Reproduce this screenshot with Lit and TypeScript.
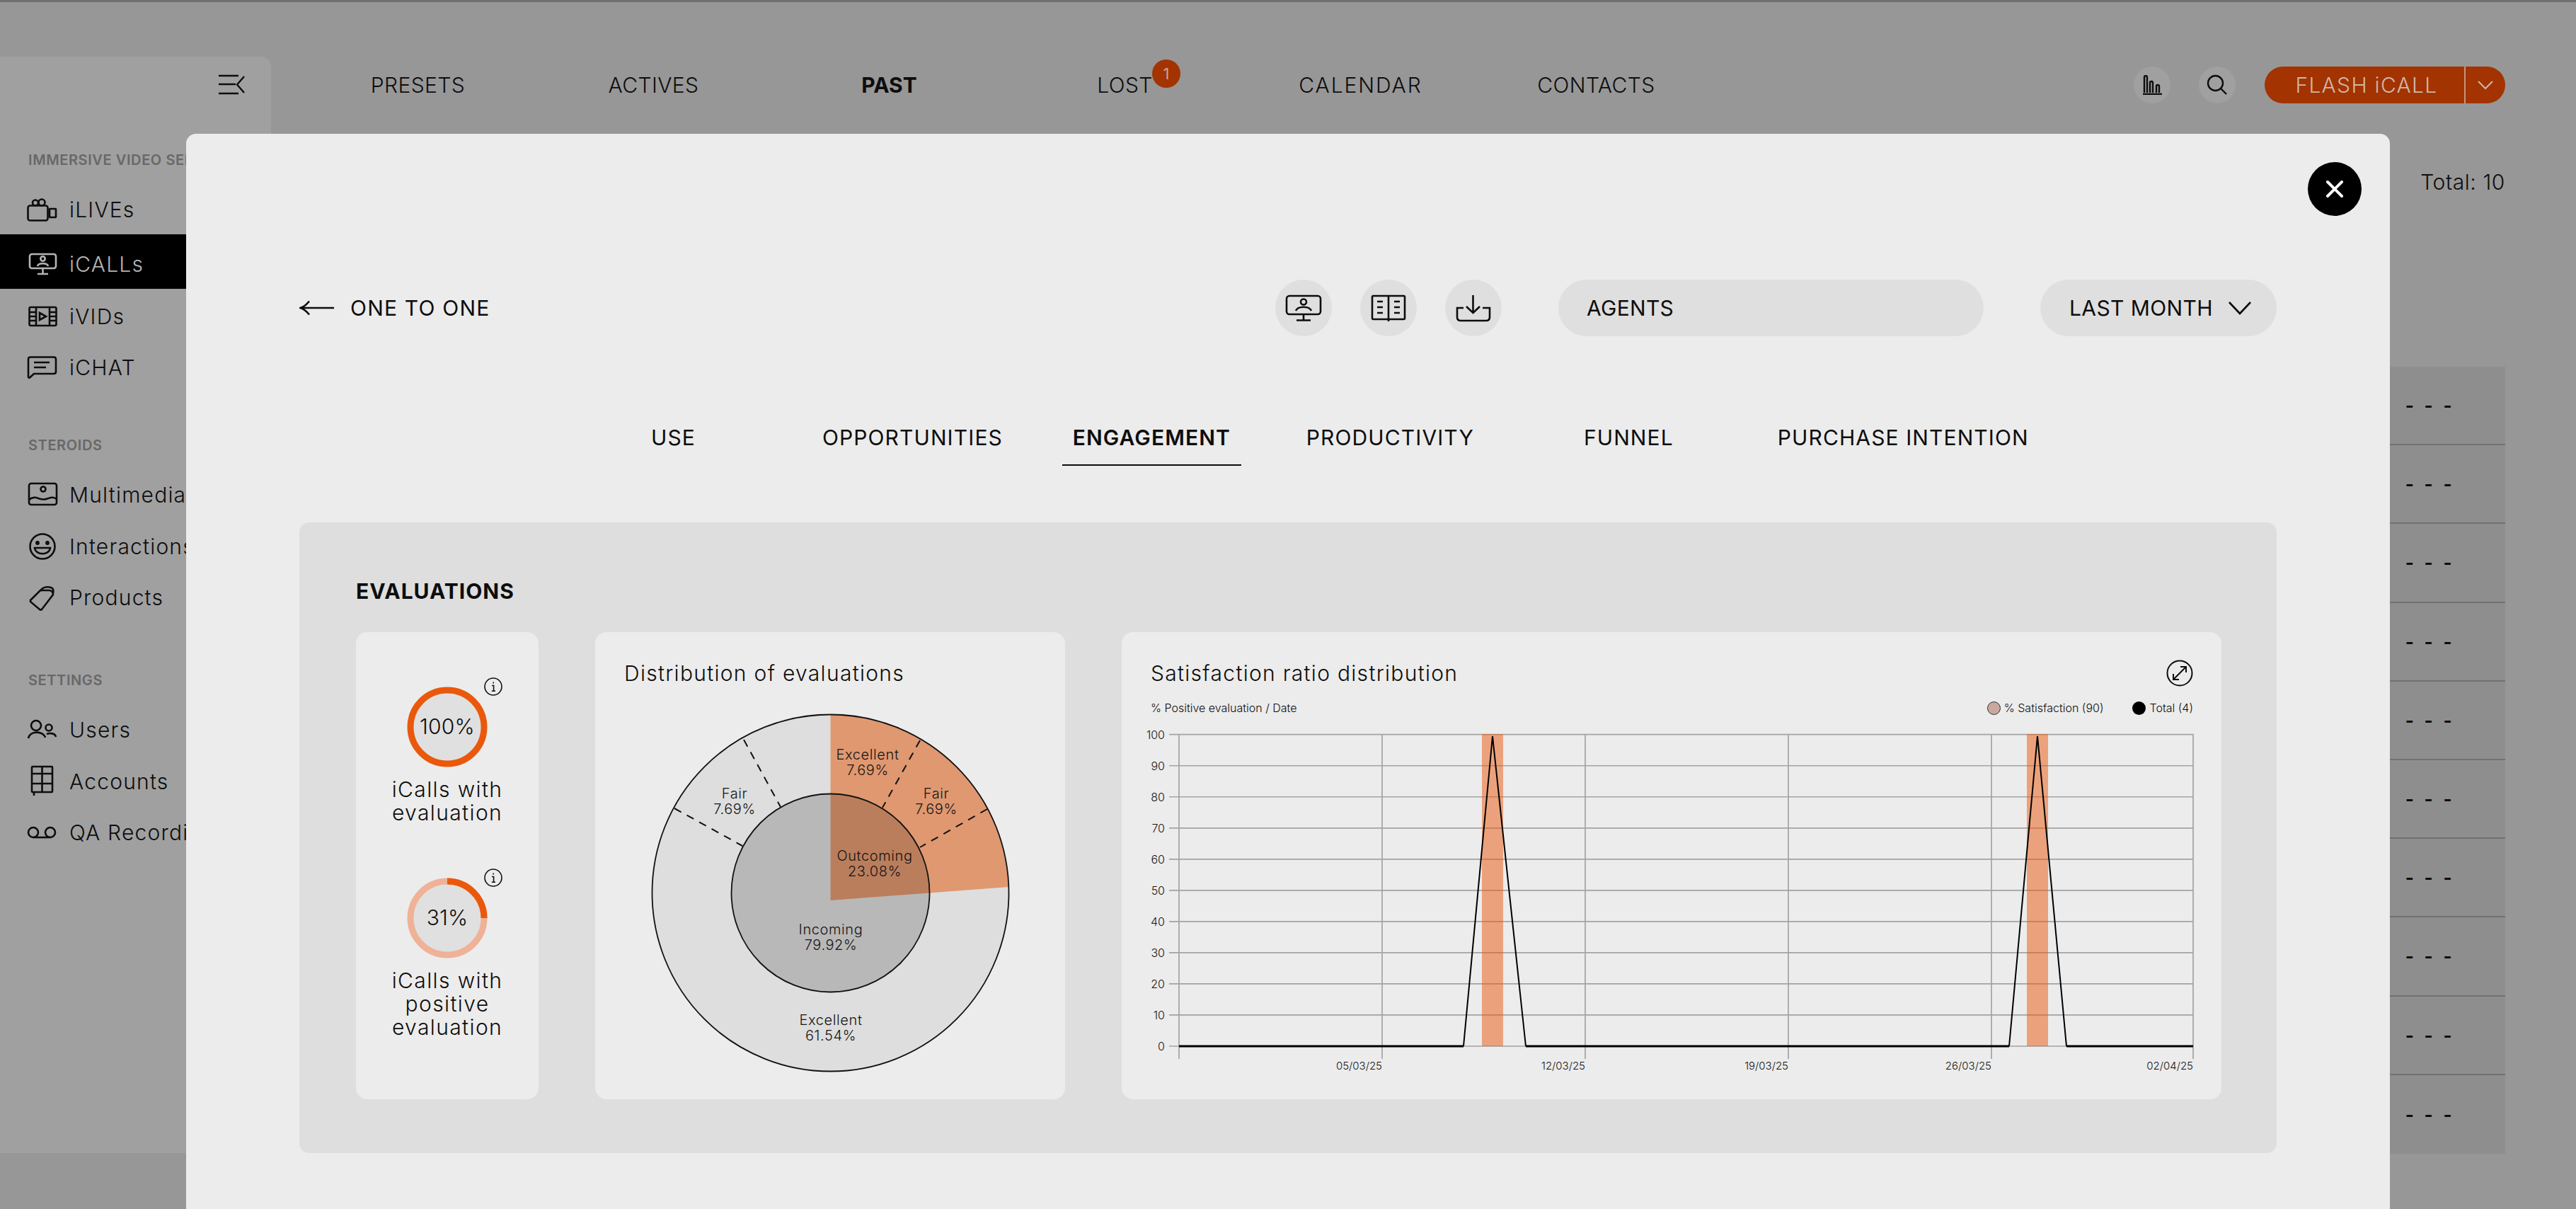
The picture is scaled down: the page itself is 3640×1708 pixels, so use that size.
import { LitElement, html, css, svg } from "lit";
import { customElement } from "lit/decorators.js";

const navItems = [
  { t: "PRESETS", c: "" },
  { t: "ACTIVES", c: "" },
  { t: "PAST", c: "current" },
  { t: "LOST", c: "" },
  { t: "CALENDAR", c: "wide" },
  { t: "CONTACTS", c: "" },
];
const tabs = ["USE", "OPPORTUNITIES", "ENGAGEMENT", "PRODUCTIVITY", "FUNNEL", "PURCHASE INTENTION"];
const yTicks = [0, 10, 20, 30, 40, 50, 60, 70, 80, 90, 100];
const xTicks = [
  { x: 1953, l: "05/03/25" },
  { x: 2240, l: "12/03/25" },
  { x: 2527, l: "19/03/25" },
  { x: 2814, l: "26/03/25" },
  { x: 3099, l: "02/04/25" },
];
const y0 = 1478;
const yStep = 44.03;

const icons: Record<string, unknown> = {
  camera: svg`<rect x="1.5" y="12.5" width="28" height="21" rx="3"/><circle cx="12" cy="8.5" r="4"/><circle cx="21" cy="8" r="4.5"/><rect x="32" y="17" width="9" height="12" rx="0.5"/>`,
  monitor: svg`<rect x="4" y="4" width="37" height="20" rx="3"/><circle cx="22.5" cy="10.5" r="3.2"/><path d="M15 21 C16 16 29 16 30 21"/><path d="M22.5 24 V31 M15 32 H30"/>`,
  film: svg`<rect x="3.5" y="5" width="38" height="26" rx="2"/><path d="M13 5 V31 M32 5 V31 M3.5 12 H13 M3.5 18 H13 M3.5 24 H13 M32 12 H41.5 M32 18 H41.5 M32 24 H41.5"/><path d="M18 13 L27 18 L18 23 Z"/>`,
  chat: svg`<path d="M5 3.5 H38 Q41 3.5 41 6.5 V24 Q41 27 38 27 H10 L4 32.5 Q2 33 2 31 V6.5 Q2 3.5 5 3.5 Z"/><path d="M10 11 H32 M10 18 H27"/>`,
  image: svg`<rect x="3" y="2" width="39" height="30" rx="3"/><circle cx="23" cy="10" r="3.5"/><path d="M3 25 C12 17 18 27 27 24 C33 22 37 20 42 24"/>`,
  smile: svg`<circle cx="22" cy="18" r="17.5"/><circle cx="15" cy="13" r="1.6"/><circle cx="29" cy="13" r="1.6"/><path d="M11 20 H33 C32 31 12 31 11 20 Z"/>`,
  tag: svg`<path d="M5 22 L19 8 H32 Q37 9 37 14 L21 35 Q20 36 18 35 L5 24 Z"/><path d="M19 9 C21 4 28 2 34 4 C37 5 38 8 37 12"/>`,
  users: svg`<circle cx="13" cy="12" r="7"/><path d="M2 30 C4 19 23 19 26 29"/><circle cx="31" cy="15" r="4.5"/><path d="M28 24 C33 22 40 23 41 28"/>`,
  accounts: svg`<rect x="7" y="-3" width="29" height="36" rx="1"/><path d="M21.5 -3 V33 M7 7 H36 M7 21 H36 M10 33 V38"/>`,
  voicemail: svg`<circle cx="9" cy="18" r="7"/><circle cx="33" cy="18" r="7"/><path d="M9 25 H33"/>`,
};

const sidebarGroups = [
  {
    cls: "g1",
    label: "IMMERSIVE VIDEO SERVICES",
    items: [
      { icon: "camera", text: "iLIVEs" },
      { icon: "monitor", text: "iCALLs", active: true },
      { icon: "film", text: "iVIDs" },
      { icon: "chat", text: "iCHAT" },
    ],
  },
  {
    cls: "g2",
    label: "STEROIDS",
    items: [
      { icon: "image", text: "Multimedia" },
      { icon: "smile", text: "Interactions" },
      { icon: "tag", text: "Products" },
    ],
  },
  {
    cls: "g3",
    label: "SETTINGS",
    items: [
      { icon: "users", text: "Users" },
      { icon: "accounts", text: "Accounts" },
      { icon: "voicemail", text: "QA Recordings" },
    ],
  },
];

const ring = (label: string, arc: boolean) => html`
  <div class="ring">
    <svg class="ring-svg" viewBox="0 0 114 114" width="114" height="114">
      <circle cx="57" cy="57" r="52" fill="#e0e0e0" stroke=${arc ? "#efb296" : "#ea580c"} stroke-width="9"></circle>
      ${arc ? svg`<path d="M57 5 A52 52 0 0 1 109 57" fill="none" stroke="#ea580c" stroke-width="9"></path>` : ""}
      <text x="57" y="67" text-anchor="middle" class="ring-text">${label}</text>
    </svg>
    <svg class="info" viewBox="0 0 26 26" width="26" height="26">
      <circle cx="13" cy="13" r="12" fill="none" stroke="#111" stroke-width="1.6"></circle>
      <path d="M11 11.5 H13.6 V19 M10.8 19.2 H16 M13.2 6.5 V8.6" fill="none" stroke="#111" stroke-width="1.6"></path>
    </svg>
  </div>
`;

@customElement("app-root")
export class AppRoot extends LitElement {
  static styles = css`
    :host {
      display: block;
      position: relative;
      width: 3640px;
      height: 1708px;
      overflow: hidden;
      background: #979797;
      font-family: Inter, "Liberation Sans", sans-serif;
      color: #0d0d0d;
    }
    svg { display: block; }
    .topline { height: 3px; background: #6f6f6f; }
    .page { display: flex; padding-top: 77px; align-items: flex-start; }

    .sidebar {
      flex: none;
      width: 383px;
      height: 1549px;
      background: #a0a0a0;
      border-top-right-radius: 14px;
      white-space: nowrap;
      overflow: hidden;
    }
    .side-head {
      height: 125px;
      display: flex;
      justify-content: flex-end;
      padding: 24px 36px 0 0;
      box-sizing: border-box;
    }
    .side-label {
      height: 42px;
      line-height: 42px;
      margin-bottom: 13px;
      padding-left: 40px;
      font-size: 20px;
      font-weight: 600;
      color: #686868;
      letter-spacing: 0.6px;
    }
    .g2 { margin-top: 53.5px; }
    .g3 { margin-top: 59px; }
    .item {
      height: 72px;
      display: flex;
      align-items: center;
      gap: 16px;
      padding-left: 38px;
      font-size: 30px;
      font-weight: 300;
      letter-spacing: 1.2px;
      box-sizing: border-box;
    }
    .g2 .item { height: 72.6px; }
    .g3 .item { height: 72.6px; }
    .item svg {
      flex: none;
      width: 44px;
      height: 36px;
      fill: none;
      stroke: currentColor;
      stroke-width: 2.6;
      overflow: visible;
    }
    .item.active {
      height: 77px;
      margin-top: -1px;
      margin-bottom: 2.5px;
      padding-top: 6px;
      background: #000;
      color: #b4b4b4;
    }

    .main { flex: 1; min-width: 0; }
    .topbar {
      height: 80px;
      display: flex;
      align-items: center;
      padding: 0 100px 0 41px;
    }
    .nav { display: grid; grid-template-columns: repeat(6, 333px); flex: none; }
    .nav-item {
      text-align: center;
      font-size: 30px;
      font-weight: 300;
      letter-spacing: 0.4px;
    }
    .nav-item.wide { letter-spacing: 1.9px; }
    .nav-item.current { font-weight: 700; letter-spacing: 0; }
    .lost { position: relative; display: inline-block; }
    .badge {
      position: absolute;
      left: 78px;
      top: -18px;
      width: 40px;
      height: 40px;
      border-radius: 50%;
      background: #a33300;
      color: #c9a594;
      font-size: 22px;
      font-weight: 400;
      line-height: 40px;
      text-align: center;
    }
    .actions { margin-left: auto; display: flex; align-items: center; }
    .round {
      width: 52px;
      height: 52px;
      border-radius: 50%;
      background: #a0a0a0;
      display: flex;
      align-items: center;
      justify-content: center;
    }
    .round + .round { margin-left: 40px; }
    .round svg { fill: none; stroke: #0d0d0d; stroke-width: 2.4; }
    .flash {
      margin-left: 41px;
      width: 340px;
      height: 52px;
      border-radius: 26px;
      background: #a33300;
      color: #cdb8aa;
      display: flex;
      font-size: 30px;
      font-weight: 300;
    }
    .flash-main {
      width: 284px;
      border-right: 2px solid #c5957c;
      box-sizing: border-box;
      display: flex;
      align-items: center;
      justify-content: center;
      padding-left: 6px;
      letter-spacing: 1.3px;
    }
    .flash-more { flex: 1; display: flex; align-items: center; justify-content: center; }
    .flash-more svg { fill: none; stroke: #cdb8aa; stroke-width: 2; }
    .total-row {
      height: 358px;
      padding-right: 100px;
      text-align: right;
      font-size: 30px;
      font-weight: 300;
      line-height: 34px;
      letter-spacing: 0.6px;
      box-sizing: border-box;
    }
    .total-spacer { height: 80px; }
    .table { margin: 0 100px 0 40px; }
    .row {
      height: 111.2px;
      box-sizing: border-box;
      background: #8e8e8e;
      border-bottom: 2px solid #717171;
      display: flex;
      align-items: center;
      justify-content: flex-end;
      padding-right: 71px;
      font-size: 26px;
      font-weight: 700;
      letter-spacing: 4.3px;
    }
    .row:last-child { border-bottom: none; }

    .modal {
      position: absolute;
      left: 263px;
      top: 189px;
      width: 3114px;
      height: 1519px;
      box-sizing: border-box;
      padding: 206px 160px 0 160px;
      background: #ececec;
      border-radius: 14px 14px 0 0;
    }
    .close {
      position: absolute;
      left: 2998px;
      top: 40px;
      width: 76px;
      height: 76px;
      border-radius: 50%;
      background: #000;
      display: flex;
      align-items: center;
      justify-content: center;
    }
    .close svg { stroke: #fff; stroke-width: 4; fill: none; stroke-linecap: round; }
    .head { display: flex; align-items: center; height: 80px; }
    .back { display: flex; align-items: center; gap: 23px; font-size: 30px; font-weight: 400; letter-spacing: 1.2px; }
    .back svg { fill: none; stroke: #0d0d0d; stroke-width: 2.6; }
    .head-right { margin-left: auto; display: flex; align-items: center; }
    .pill-icon {
      width: 80px;
      height: 80px;
      border-radius: 50%;
      background: #dfdfdf;
      display: flex;
      align-items: center;
      justify-content: center;
      margin-right: 40px;
    }
    .pill-icon svg { fill: none; stroke: #0d0d0d; stroke-width: 2.6; overflow: visible; }
    .agents {
      margin-left: 40px;
      width: 601px;
      height: 80px;
      border-radius: 40px;
      background: #dfdfdf;
      display: flex;
      align-items: center;
      padding-left: 40px;
      box-sizing: border-box;
      font-size: 30px;
      font-weight: 400;
      letter-spacing: 0.3px;
    }
    .period {
      margin-left: 80px;
      width: 334px;
      height: 80px;
      border-radius: 40px;
      background: #dfdfdf;
      display: flex;
      align-items: center;
      padding-left: 41px;
      gap: 21px;
      box-sizing: border-box;
      font-size: 30px;
      font-weight: 400;
      letter-spacing: 0.4px;
      white-space: nowrap;
    }
    .period svg { fill: none; stroke: #0d0d0d; stroke-width: 2.6; }

    .tabs { display: flex; gap: 84px; margin: 103px 0 80px 402px; height: 80px; }
    .tab {
      flex: none;
      min-width: 253px;
      box-sizing: border-box;
      text-align: center;
      line-height: 80px;
      font-size: 30px;
      font-weight: 400;
      letter-spacing: 1.1px;
      white-space: nowrap;
    }
    .tab.on { font-weight: 600; border-bottom: 2.5px solid #0d0d0d; }

    .panel {
      height: 891px;
      box-sizing: border-box;
      padding: 72px 78px 0 80px;
      background: #dedede;
      border-radius: 14px;
    }
    .panel-title { height: 50px; line-height: 50px; margin-bottom: 33px; font-size: 30px; font-weight: 700; letter-spacing: 1px; }
    .cards { display: flex; gap: 80px; height: 660px; }
    .card { background: #ececec; border-radius: 16px; box-sizing: border-box; flex: none; }
    .card-stats {
      width: 258px;
      padding-top: 77px;
      display: flex;
      flex-direction: column;
      align-items: center;
    }
    .stat { display: flex; flex-direction: column; align-items: center; }
    .stat + .stat { margin-top: 75px; }
    .ring { position: relative; width: 114px; height: 114px; }
    .ring-text { font-size: 30px; font-weight: 300; fill: #0d0d0d; font-family: Inter, sans-serif; letter-spacing: 0.2px; }
    .info { position: absolute; left: 109px; top: -13px; }
    .stat-label {
      margin-top: 15px;
      text-align: center;
      font-size: 30px;
      font-weight: 300;
      line-height: 33px;
      letter-spacing: 1.4px;
    }
    .card-pie { width: 664px; padding-top: 38px; }
    .card-title { height: 40px; line-height: 40px; font-size: 30px; font-weight: 300; letter-spacing: 1.3px; }
    .card-pie .card-title { padding-left: 41px; }
    .pie-svg { margin-top: 19px; }
    .pie-label { font-size: 20px; font-weight: 300; fill: #151515; text-anchor: middle; font-family: Inter, sans-serif; letter-spacing: 0.6px; }
    .card-chart { width: 1554px; padding-top: 38px; }
    .chart-head { display: flex; justify-content: space-between; align-items: center; padding: 0 40px 0 41px; }
    .chart-head svg { fill: none; stroke: #0d0d0d; stroke-width: 2; }
    .legend-row {
      margin-top: 12px;
      height: 34px;
      padding: 0 40px 0 41px;
      display: flex;
      align-items: center;
      font-size: 16px;
      font-weight: 300;
    }
    .legend-row .grow { flex: 1; }
    .legend { display: flex; align-items: center; gap: 5px; }
    .legend + .legend { margin-left: 41px; }
    .swatch { width: 19px; height: 19px; border-radius: 50%; box-sizing: border-box; }
    .swatch.a { background: #c9a89d; border: 1.5px solid #333; }
    .swatch.b { background: #000; }
    .axis { font-size: 16px; font-weight: 300; fill: #151515; font-family: Inter, sans-serif; }
    .axis.x { font-size: 15px; }
  `;

  render() {
    return html`
      <div class="topline"></div>
      <div class="page">
        <aside class="sidebar">
          <div class="side-head">
            <svg width="40" height="30" viewBox="0 0 40 30" fill="none" stroke="#0d0d0d" stroke-width="2.4">
              <path d="M2 3 H30 M2 15 H26 M2 28 H30 M38 4 L28 15.5 L38 27"></path>
            </svg>
          </div>
          ${sidebarGroups.map(
            (g) => html`
              <div class=${g.cls}>
                <div class="side-label">${g.label}</div>
                ${g.items.map(
                  (it: any) => html`
                    <div class="item ${it.active ? "active" : ""}">
                      <svg viewBox="0 0 44 36">${icons[it.icon]}</svg>
                      <span>${it.text}</span>
                    </div>
                  `
                )}
              </div>
            `
          )}
        </aside>
        <div class="main">
          <header class="topbar">
            <nav class="nav">
              ${navItems.map((n) =>
                n.t === "LOST"
                  ? html`<div class="nav-item"><span class="lost">LOST<span class="badge">1</span></span></div>`
                  : html`<div class="nav-item ${n.c}">${n.t}</div>`
              )}
            </nav>
            <div class="actions">
              <div class="round">
                <svg width="28" height="28" viewBox="0 0 28 28">
                  <path d="M1 27 H28 M3 25 V3 Q3 1 5 1 Q7 1 7 3 V25 M11 25 V11 Q11 9 13 9 Q15 9 15 11 V25 M20 25 V16 Q20 14 22 14 Q24 14 24 16 V25"></path>
                </svg>
              </div>
              <div class="round">
                <svg width="30" height="30" viewBox="0 0 30 30">
                  <circle cx="12.5" cy="12.5" r="10.5"></circle>
                  <path d="M20 20 L28 28"></path>
                </svg>
              </div>
              <div class="flash">
                <div class="flash-main">FLASH iCALL</div>
                <div class="flash-more">
                  <svg width="24" height="14" viewBox="0 0 24 14"><path d="M2 2 L12 12 L22 2"></path></svg>
                </div>
              </div>
            </div>
          </header>
          <div class="total-row"><div class="total-spacer"></div>Total: 10</div>
          <div class="table">
            ${Array.from({ length: 10 }).map(() => html`<div class="row">- - -</div>`)}
          </div>
        </div>
      </div>

      <section class="modal">
        <div class="close">
          <svg width="26" height="26" viewBox="0 0 26 26"><path d="M3 3 L23 23 M23 3 L3 23"></path></svg>
        </div>
        <div class="head">
          <div class="back">
            <svg width="49" height="22" viewBox="0 0 49 22"><path d="M49 11 H2 M14 1.5 Q8 9 1.5 11 Q8 13 14 20.5"></path></svg>
            <span>ONE TO ONE</span>
          </div>
          <div class="head-right">
            <div class="pill-icon">
              <svg width="50" height="36" viewBox="0 0 50 36">
                <rect x="1" y="1" width="48" height="26" rx="4"></rect>
                <circle cx="25" cy="9.5" r="4"></circle>
                <path d="M14 22 C17 15 33 15 36 22 M25 27 V35 M15 35.5 H35"></path>
              </svg>
            </div>
            <div class="pill-icon">
              <svg width="48" height="36" viewBox="0 0 48 36">
                <rect x="1" y="1" width="46" height="33" rx="1.5"></rect>
                <path d="M24 1 V37 M8 9 H16 M8 17 H16 M8 25 H16 M32 9 H40 M32 17 H40 M32 25 H40"></path>
              </svg>
            </div>
            <div class="pill-icon">
              <svg width="50" height="37" viewBox="0 0 50 37">
                <path d="M24.5 0 V24 M15 16 L24.5 25 L34 16"></path>
                <path d="M11 18 H2 V31 Q2 36 7 36 H43 Q48 36 48 31 V18 H38"></path>
              </svg>
            </div>
            <div class="agents">AGENTS</div>
            <div class="period">
              <span>LAST MONTH</span>
              <svg width="34" height="20" viewBox="0 0 34 20"><path d="M2 2 L17 18 L32 2"></path></svg>
            </div>
          </div>
        </div>
        <div class="tabs">
          ${tabs.map((t) => html`<div class="tab ${t === "ENGAGEMENT" ? "on" : ""}">${t}</div>`)}
        </div>
        <div class="panel">
          <div class="panel-title">EVALUATIONS</div>
          <div class="cards">
            <div class="card card-stats">
              <div class="stat">${ring("100%", false)}<div class="stat-label">iCalls with<br />evaluation</div></div>
              <div class="stat">${ring("31%", true)}<div class="stat-label">iCalls with<br />positive<br />evaluation</div></div>
            </div>
            <div class="card card-pie">
              <div class="card-title">Distribution of evaluations</div>
              <svg class="pie-svg" width="664" height="563" viewBox="841 990 664 563">
                <defs>
                  <clipPath id="inner"><circle cx="1173.5" cy="1261.5" r="140"></circle></clipPath>
                </defs>
                <circle cx="1173.5" cy="1261.5" r="252" fill="#dedede"></circle>
                <path d="M1173.5 1009.5 A252 252 0 0 1 1425 1253 L1173.5 1272 Z" fill="#e09870"></path>
                <circle cx="1173.5" cy="1261.5" r="140" fill="#b9b8b8"></circle>
                <path d="M1173.5 1009.5 A252 252 0 0 1 1425 1253 L1173.5 1272 Z" fill="#bb7e5c" clip-path="url(#inner)"></path>
                <g fill="none" stroke="#111" stroke-width="1.8">
                  <circle cx="1173.5" cy="1261.5" r="252"></circle>
                  <circle cx="1173.5" cy="1261.5" r="140"></circle>
                </g>
                <g fill="none" stroke="#111" stroke-width="2" stroke-dasharray="11 9">
                  <path d="M1300 1046 L1247 1141"></path>
                  <path d="M1395 1143 L1300 1197"></path>
                  <path d="M1051 1045 L1103 1140"></path>
                  <path d="M953 1142 L1049 1195"></path>
                </g>
                <text class="pie-label" x="1226" y="1073">Excellent</text>
                <text class="pie-label" x="1226" y="1095">7.69%</text>
                <text class="pie-label" x="1323" y="1128">Fair</text>
                <text class="pie-label" x="1323" y="1150">7.69%</text>
                <text class="pie-label" x="1038" y="1128">Fair</text>
                <text class="pie-label" x="1038" y="1150">7.69%</text>
                <text class="pie-label" x="1236" y="1216">Outcoming</text>
                <text class="pie-label" x="1236" y="1238">23.08%</text>
                <text class="pie-label" x="1174" y="1320">Incoming</text>
                <text class="pie-label" x="1174" y="1342">79.92%</text>
                <text class="pie-label" x="1174" y="1448">Excellent</text>
                <text class="pie-label" x="1174" y="1470">61.54%</text>
              </svg>
            </div>
            <div class="card card-chart">
              <div class="chart-head">
                <div class="card-title">Satisfaction ratio distribution</div>
                <svg width="38" height="38" viewBox="0 0 38 38">
                  <circle cx="19" cy="19" r="17.5"></circle>
                  <path d="M11 27 L27 11 M20 10 H28 V18 M10 20 V28 H18"></path>
                </svg>
              </div>
              <div class="legend-row">
                <span>% Positive evaluation / Date</span>
                <span class="grow"></span>
                <span class="legend"><span class="swatch a"></span>% Satisfaction (90)</span>
                <span class="legend"><span class="swatch b"></span>Total (4)</span>
              </div>
              <svg width="1554" height="536" viewBox="1585 1017 1554 536">
                <g stroke="#a3a3a3" stroke-width="1.7" fill="none">
                  ${yTicks.map((t) => svg`<line x1="1652" x2="3099" y1=${y0 - (t / 10) * yStep} y2=${y0 - (t / 10) * yStep}></line>`)}
                  <line x1="1666" x2="1666" y1="1037" y2="1496"></line>
                  ${xTicks.map((t) => svg`<line x1=${t.x} x2=${t.x} y1="1037" y2="1496"></line>`)}
                </g>
                <rect x="2094" y="1037" width="30" height="441" fill="#ea580c" fill-opacity="0.5"></rect>
                <rect x="2864" y="1037" width="30" height="441" fill="#ea580c" fill-opacity="0.5"></rect>
                <path d="M1666 1478 H2068 M2156 1478 H2839 M2920 1478 H3099" stroke="#000" stroke-width="3" fill="none"></path>
                <path d="M2068 1478 L2109 1040 L2156 1478 M2839 1478 L2879 1040 L2920 1478" stroke="#000" stroke-width="2" fill="none"></path>
                ${yTicks.map((t) => svg`<text class="axis" x="1646" y=${y0 - (t / 10) * yStep + 6} text-anchor="end">${t}</text>`)}
                ${xTicks.map((t) => svg`<text class="axis x" x=${t.x} y="1511" text-anchor="end">${t.l}</text>`)}
              </svg>
            </div>
          </div>
        </div>
      </section>
    `;
  }
}
